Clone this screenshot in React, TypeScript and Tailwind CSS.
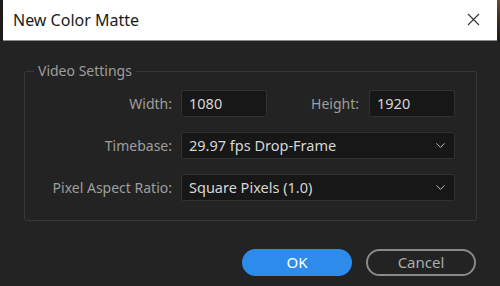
import { ChevronDown } from 'lucide-react';

function Field({ value, className }: { value: string; className: string }) {
    return (
        <div
            className={`h-[27px] bg-[#171717] border border-[#313131] rounded-[2px] flex items-center pl-[7px] text-[14.5px] text-[#d6d6d6] ${className}`}
        >
            {value}
        </div>
    );
}

function Select({ value }: { value: string }) {
    return (
        <div className="h-[27px] w-[274px] bg-[#171717] border border-[#313131] rounded-[2px] flex items-center justify-between pl-[7px] pr-[6px] text-[14.5px] text-[#d6d6d6]">
            <span>{value}</span>
            <ChevronDown size={15} strokeWidth={1.6} className="text-[#bdbdbd]" />
        </div>
    );
}

function App() {
    return (
        <div className="w-[500px] h-[286px] bg-[#232323] flex flex-col overflow-hidden font-['Noto_Sans','Open_Sans',sans-serif]">
            {/* Title bar */}
            <div className="flex h-[41px] shrink-0">
                <div className="w-[3px] bg-[#1c1c1c]" />
                <div className="flex-1 bg-white border-b border-[#8c8c8c] flex items-center justify-between pl-[10px] pr-[17px]">
                    <span className="text-[16px] text-[#1a1a1a] mb-[1px]">New Color Matte</span>
                    <svg width="13" height="13" viewBox="0 0 13 13" className="mb-[1px]">
                        <path d="M1 1 L12 12 M12 1 L1 12" stroke="#333" strokeWidth="1.1" fill="none" />
                    </svg>
                </div>
                <div className="w-[3px] bg-gradient-to-b from-[#6b4a2a] via-[#3a2a1a] to-[#1c1c1c]" />
            </div>

            {/* Video settings group */}
            <fieldset className="ml-[24px] mt-[20px] w-[453px] h-[160px] border border-[#373737] rounded-[2px] pl-0 pr-[21px] pt-[9px]">
                <legend className="ml-[9px] px-[4px] text-[14px] leading-[20px] text-[#9e9e9e]">
                    Video Settings
                </legend>
                <div className="grid grid-cols-[147px_1fr] gap-x-[9px] gap-y-[15px] items-center text-[14px] text-[#9e9e9e]">
                    <span className="text-right">Width:</span>
                    <div className="flex items-center">
                        <Field value="1080" className="w-[86px]" />
                        <span className="flex-1 text-right pr-[10px]">Height:</span>
                        <Field value="1920" className="w-[86px]" />
                    </div>

                    <span className="text-right">Timebase:</span>
                    <Select value="29.97 fps Drop-Frame" />

                    <span className="text-right">Pixel Aspect Ratio:</span>
                    <Select value="Square Pixels (1.0)" />
                </div>
            </fieldset>

            {/* Buttons */}
            <div className="flex justify-end gap-[14px] pr-[24px] mt-[28px]">
                <button className="w-[110px] h-[27px] rounded-full bg-[#2d8ceb] text-white text-[15px]">
                    OK
                </button>
                <button className="w-[110px] h-[27px] rounded-full border-2 border-[#8a8a8a] text-[#acacac] text-[15px]">
                    Cancel
                </button>
            </div>
        </div>
    );
}

export default App;
